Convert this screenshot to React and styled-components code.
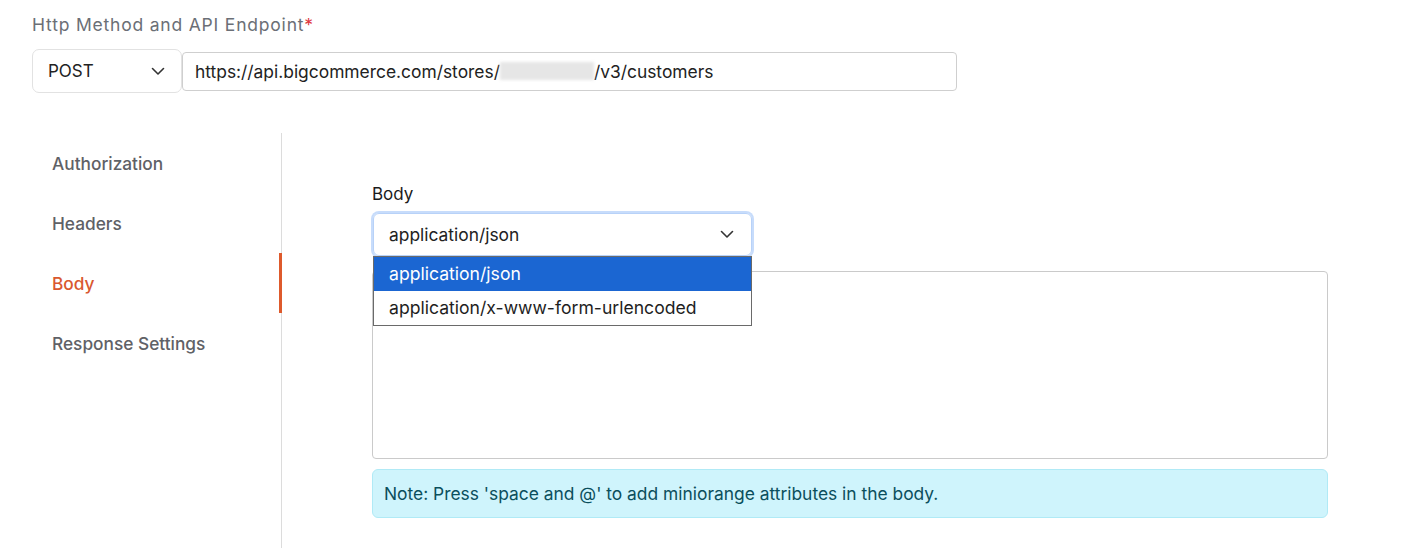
import React from "react";
import styled, { createGlobalStyle } from "styled-components";

const GlobalStyle = createGlobalStyle`
  html, body {
    margin: 0;
    padding: 0;
    background: #ffffff;
    font-family: "Inter", "Noto Sans", sans-serif;
  }
  * {
    box-sizing: border-box;
  }
`;

const Page = styled.div`
  width: 1420px;
  height: 548px;
  overflow: hidden;
  padding: 14px 0 0 32px;
`;

const FieldLabel = styled.div`
  font-size: 17.5px;
  color: #6b6f76;
  line-height: 22px;
  height: 22px;
  letter-spacing: 0.8px;
`;

const Required = styled.span`
  color: #e0383e;
`;

const EndpointRow = styled.div`
  display: flex;
  align-items: center;
  margin-top: 13px;
`;

const MethodSelect = styled.div`
  width: 150px;
  height: 44px;
  border: 1px solid #e2e2e2;
  border-radius: 7px;
  display: flex;
  align-items: center;
  justify-content: space-between;
  padding: 0 16px 0 15px;
  font-size: 17px;
  color: #222;
`;

const UrlInput = styled.div`
  width: 775px;
  height: 39px;
  border: 1px solid #cfcfcf;
  border-radius: 4px;
  display: flex;
  align-items: center;
  padding: 0 12px;
  font-size: 17.4px;
  color: #222;
`;

const Blurred = styled.span`
  display: inline-block;
  width: 94px;
  height: 18px;
  background: #e6e6e6;
  filter: blur(1.5px);
`;

const Main = styled.div`
  display: flex;
  margin-top: 40px;
`;

const Nav = styled.div`
  width: 250px;
  border-right: 1px solid #dcdcdc;
  height: 420px;
`;

const NavItem = styled.div`
  position: relative;
  height: 60px;
  display: flex;
  align-items: center;
  padding-left: 20px;
  font-size: 17.3px;
  font-weight: 500;
  color: ${(p) => (p.active ? "#d9582f" : "#5f6166")};

  ${(p) =>
    p.active &&
    `
    &::after {
      content: "";
      position: absolute;
      right: -1px;
      top: 0;
      width: 3px;
      height: 60px;
      background: #de5a2c;
    }
  `}
`;

const Content = styled.div`
  flex: 0 0 auto;
  padding: 50px 0 0 90px;
  width: 1047px;
`;

const BodyLabel = styled.div`
  font-size: 17px;
  color: #1b1b1b;
  line-height: 22px;
`;

const SelectWrap = styled.div`
  position: relative;
  margin: 8px 0 0 1px;
  width: 379px;
`;

const SelectBox = styled.div`
  height: 43px;
  border: 1px solid #b8d2f8;
  border-radius: 6px;
  box-shadow: 0 0 0 2px #c7dcfb;
  display: flex;
  align-items: center;
  justify-content: space-between;
  padding: 0 17px 0 15px;
  font-size: 17.4px;
  color: #222;
`;

const Options = styled.div`
  position: absolute;
  left: 0;
  top: 43px;
  width: 379px;
  border: 1px solid #6a6a6a;
  background: #fff;
  z-index: 2;
`;

const Option = styled.div`
  height: 34px;
  display: flex;
  align-items: center;
  padding: 0 0 2px 15px;
  font-size: 17.6px;
  background: ${(p) => (p.selected ? "#1b66d2" : "#fff")};
  color: ${(p) => (p.selected ? "#fff" : "#1e1e1e")};
`;

const TextArea = styled.div`
  margin-top: 15px;
  width: 956px;
  height: 188px;
  border: 1px solid #cacaca;
  border-radius: 4px;
`;

const Note = styled.div`
  margin-top: 10px;
  width: 956px;
  height: 49px;
  background: #cff4fc;
  border: 1px solid #b0eaf6;
  border-radius: 6px;
  display: flex;
  align-items: center;
  padding-left: 11px;
  font-size: 17.4px;
  color: #0b4f5c;
`;

function Chevron() {
  return (
    <svg width="14" height="9" viewBox="0 0 14 9" fill="none">
      <polyline
        points="1.5,1.5 7,7 12.5,1.5"
        stroke="#333"
        strokeWidth="1.6"
        strokeLinecap="round"
        strokeLinejoin="round"
      />
    </svg>
  );
}

const navItems = ["Authorization", "Headers", "Body", "Response Settings"];

export default function App() {
  return (
    <Page>
      <GlobalStyle />
      <FieldLabel>
        Http Method and API Endpoint<Required>*</Required>
      </FieldLabel>
      <EndpointRow>
        <MethodSelect>
          POST
          <Chevron />
        </MethodSelect>
        <UrlInput>
          https://api.bigcommerce.com/stores/
          <Blurred />
          /v3/customers
        </UrlInput>
      </EndpointRow>
      <Main>
        <Nav>
          {navItems.map((item) => (
            <NavItem key={item} active={item === "Body"}>
              {item}
            </NavItem>
          ))}
        </Nav>
        <Content>
          <BodyLabel>Body</BodyLabel>
          <SelectWrap>
            <SelectBox>
              application/json
              <Chevron />
            </SelectBox>
            <Options>
              <Option selected>application/json</Option>
              <Option>application/x-www-form-urlencoded</Option>
            </Options>
          </SelectWrap>
          <TextArea />
          <Note>Note: Press 'space and @' to add miniorange attributes in the body.</Note>
        </Content>
      </Main>
    </Page>
  );
}
